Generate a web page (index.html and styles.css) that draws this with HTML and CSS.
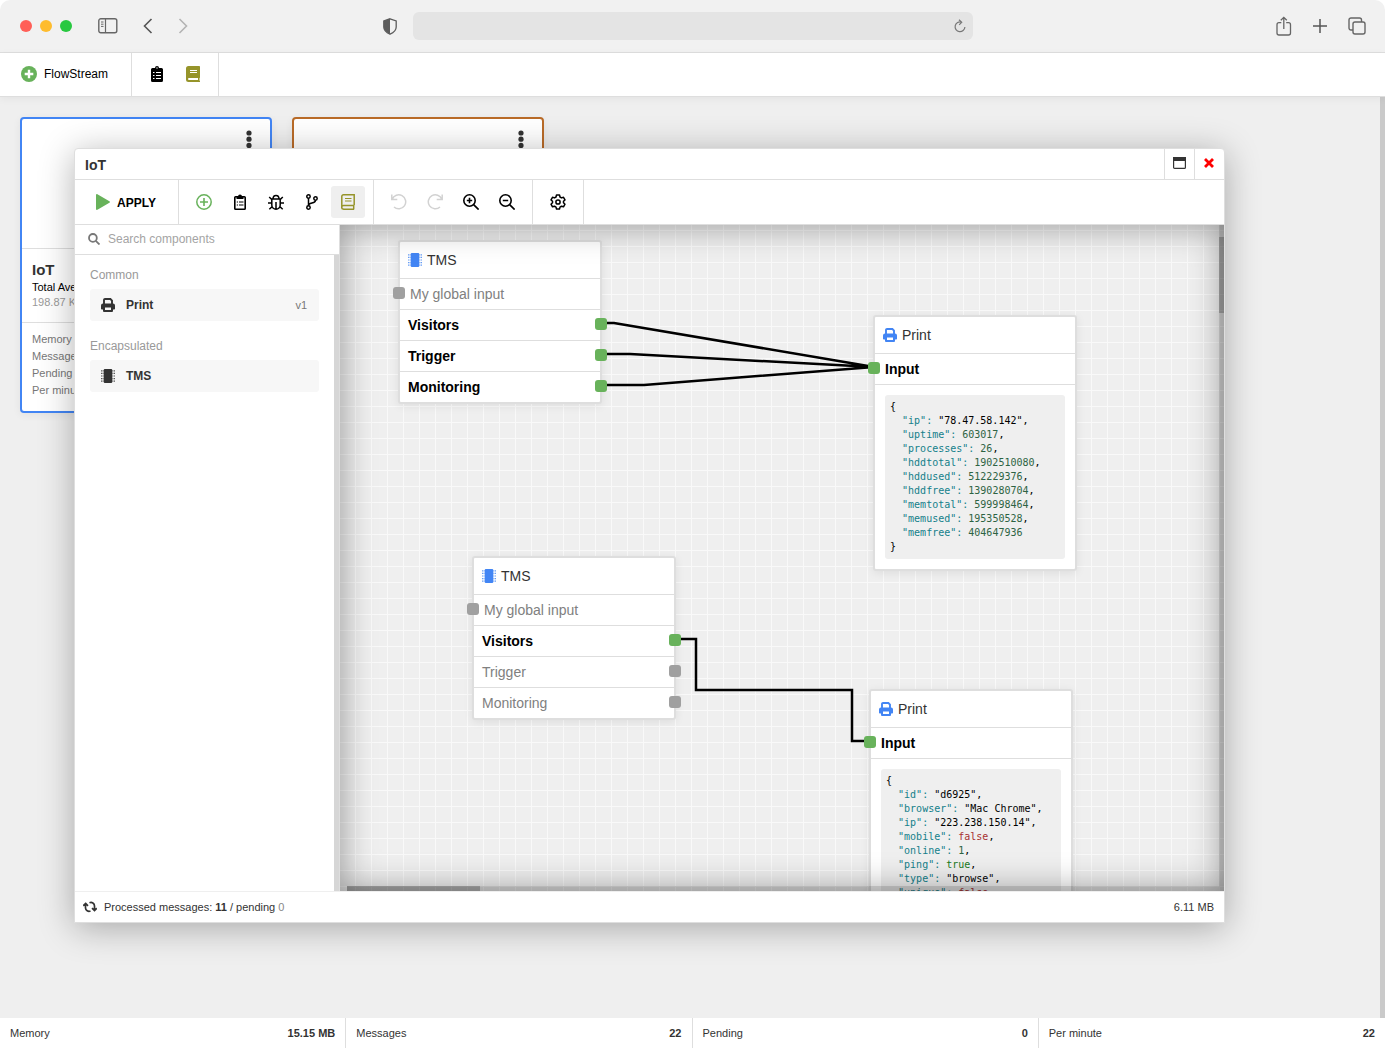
FILE: index.html
```html
<!DOCTYPE html>
<html lang="en">
<head>
<meta charset="utf-8">
<title>FlowStream</title>
<link rel="stylesheet" href="styles.css">
</head>
<body>
<svg class="sprite" aria-hidden="true">
  <symbol id="chip" viewBox="0 0 14 14"><rect x="2.700" y="0" width="8.600" height="14" rx="1.200" fill="currentColor"/><path d="M0 1.800h2.500M0 4.400h2.500M0 7h2.500M0 9.600h2.500M0 12.200h2.500M11.500 1.800H14M11.500 4.400H14M11.500 7H14M11.500 9.600H14M11.500 12.200H14" stroke="currentColor" stroke-width="1.200" stroke-dasharray="1 .5" opacity=".8"/></symbol>
  <symbol id="printer" viewBox="0 0 14 14"><path d="M3 6V2a1 1 0 0 1 1-1h5.400L11 2.600V6" fill="none" stroke="currentColor" stroke-width="1.900"/><path fill="currentColor" fill-rule="evenodd" d="M2 5.500h10a2 2 0 0 1 2 2v3.200a.8.800 0 0 1-.8.800H12V13a1 1 0 0 1-1 1H3a1 1 0 0 1-1-1v-1.500H.8a.8.800 0 0 1-.8-.8V7.500a2 2 0 0 1 2-2zM4 9.500v2.600h6V9.500z"/></symbol>
</svg>
<header class="chrome">
  <div class="lights"><i class="light red"></i><i class="light amber"></i><i class="light green"></i></div>
  <button class="plain sidebar-toggle" aria-label="Sidebar"><svg width="20" height="16" viewBox="0 0 20 16" fill="none" stroke="#666"><rect x=".8" y=".8" width="18" height="14" rx="2" stroke-width="1.400"/><path d="M7.500 1v14" stroke-width="1.200"/><path d="M3 4h2.500M3 6.200h2.500M3 8.400h2.500"/></svg></button>
  <button class="plain back" aria-label="Back"><svg width="10" height="16" viewBox="0 0 10 16" fill="none" stroke="#555" stroke-width="1.600"><path d="M8.500 1 1.500 8l7 7"/></svg></button>
  <button class="plain forward" aria-label="Forward"><svg width="10" height="16" viewBox="0 0 10 16" fill="none" stroke="#b4b4b4" stroke-width="1.600"><path d="m1.500 1 7 7-7 7"/></svg></button>
  <div class="address">
    <svg width="14" height="17" viewBox="0 0 14 17"><path d="M7 .8 13.200 3v6c0 3.400-3 5.800-6.200 7.200C3.800 14.800.8 12.400.8 9V3z" fill="none" stroke="#5c5c5c" stroke-width="1.300"/><path d="M7 .8V16C3.800 14.600.8 12.400.8 9V3z" fill="#5c5c5c"/></svg>
    <div class="field"><input type="text" aria-label="Address"><button class="plain" aria-label="Reload"><svg width="12" height="14" viewBox="0 0 12 14" fill="none" stroke="#777" stroke-width="1.200"><path d="M7.500 3.100A4.900 4.900 0 1 0 10.900 8M5 .8l2.700 2.400-2.500 2.600"/></svg></button></div>
  </div>
  <div class="chrome-tools">
    <button class="plain" aria-label="Share"><svg width="16" height="20" viewBox="0 0 16 20" fill="none" stroke="#666" stroke-width="1.300"><path d="M5.300 6.700H3a2 2 0 0 0-2 2v8.300a2 2 0 0 0 2 2h9.500a2 2 0 0 0 2-2V8.700a2 2 0 0 0-2-2h-2.300M7.800 13V1.500M4.800 4.300l3-3 3 3"/></svg></button>
    <button class="plain" aria-label="New tab"><svg width="14" height="14" viewBox="0 0 14 14" stroke="#555" stroke-width="1.500"><path d="M7 0v14M0 7h14"/></svg></button>
    <button class="plain" aria-label="Tabs"><svg width="18" height="18" viewBox="0 0 18 18" fill="none" stroke="#666" stroke-width="1.400"><rect x="5" y="5" width="12" height="12" rx="2"/><path d="M5 13H3a2 2 0 0 1-2-2V3a2 2 0 0 1 2-2h8.500a2 2 0 0 1 2 2v2"/></svg></button>
  </div>
</header>
<nav class="appbar">
  <div class="group brand"><button class="plain"><svg width="16" height="16" viewBox="0 0 16 16"><circle cx="8" cy="8" r="8" fill="#68b25b"/><path d="M8 3.700v8.600M3.700 8h8.600" stroke="#fff" stroke-width="2.400"/></svg>FlowStream</button></div>
  <div class="group shortcuts">
    <button class="plain" aria-label="Clipboard"><svg width="12" height="16" viewBox="0 0 12 16"><path d="M1.500 2H4a2 2 0 0 1 4 0h2.500A1.500 1.500 0 0 1 12 3.500v11a1.500 1.500 0 0 1-1.500 1.500h-9A1.500 1.500 0 0 1 0 14.500v-11A1.500 1.500 0 0 1 1.500 2z"/><path d="M2 6.500h1.500M5 6.500h5M2 9.500h1.500M5 9.500h5M2 12.500h1.500M5 12.500h5" stroke="#fff"/><circle cx="6" cy="2" r=".7" fill="#fff"/></svg></button>
    <button class="plain" aria-label="Documentation"><svg width="14" height="16" viewBox="0 0 14 16"><path fill="#96942a" d="M2.500 0h10.700a.8.800 0 0 1 .8.800v10.700l-.5.700v2.300l.5.500v1H2.500A2.500 2.500 0 0 1 0 13.500v-11A2.500 2.500 0 0 1 2.500 0z"/><path d="M4 4.500h7M4 6.500h7" stroke="#fff"/><path d="M3 12h9v2H3a1 1 0 0 1 0-2z" fill="#fff"/></svg></button>
  </div>
</nav>
<main class="desktop">
  <section class="cards">
    <article class="card active">
      <div class="card-top"><button class="plain" aria-label="Menu"><svg width="6" height="18" viewBox="0 0 6 18" fill="#333"><circle cx="3" cy="3" r="2.600"/><circle cx="3" cy="9.200" r="2.600"/><circle cx="3" cy="15.400" r="2.600"/></svg></button></div>
      <div class="card-title"><h2>IoT</h2><p>Total Average</p><small>198.87 KB</small></div>
      <ul><li>Memory</li><li>Messages</li><li>Pending</li><li>Per minute</li></ul>
    </article>
    <article class="card orange">
      <div class="card-top"><button class="plain" aria-label="Menu"><svg width="6" height="18" viewBox="0 0 6 18" fill="#333"><circle cx="3" cy="3" r="2.600"/><circle cx="3" cy="9.200" r="2.600"/><circle cx="3" cy="15.400" r="2.600"/></svg></button></div>
    </article>
  </section>
  <section class="window">
    <header class="titlebar">
      <h1>IoT</h1>
      <button class="plain" aria-label="Maximize"><svg width="13" height="12" viewBox="0 0 13 12"><rect x=".6" y=".6" width="11.800" height="10.800" rx="1" fill="#fff" stroke="#333" stroke-width="1.200"/><path d="M0 0h13v4H0z" fill="#333"/></svg></button>
      <button class="plain" aria-label="Close"><svg width="10" height="10" viewBox="0 0 10 10" stroke="#f00" stroke-width="2.800"><path d="m1 1 8 8M9 1 1 9"/></svg></button>
    </header>
    <div class="toolbar">
      <div class="tools apply"><button class="plain"><svg width="14" height="16" viewBox="0 0 14 16"><path fill="#68b25b" d="M0 1C0 .2.700-.2 1.400.2l12 7c.7.400.7 1.200 0 1.600l-12 7C.700 16.200 0 15.800 0 15z"/></svg><span>APPLY</span></button></div>
      <div class="tools">
        <button class="plain" aria-label="Add"><svg width="16" height="16" viewBox="0 0 16 16" fill="none" stroke="#68b25b"><circle cx="8" cy="8" r="7.200" stroke-width="1.500"/><path d="M8 4v8M4 8h8" stroke-width="1.600"/></svg></button>
        <button class="plain" aria-label="Clipboard"><svg width="12" height="16" viewBox="0 0 12 16"><rect x=".8" y="2.800" width="10.400" height="12.400" rx=".8" fill="none" stroke="#000" stroke-width="1.600"/><path d="M2.500 5V2.500H4a2 2 0 0 1 4 0h1.500V5z"/><path d="M2.800 8h1.200M5 8h4.500M2.800 11h1.200M5 11h4.500" stroke="#000"/></svg></button>
        <button class="plain" aria-label="Debug"><svg width="16" height="16" viewBox="0 0 16 16" fill="none" stroke="#000" stroke-width="1.500"><path d="M3.800 5h8.400v6a4.200 4.200 0 0 1-8.400 0zM5 5a3 3.500 0 0 1 6 0M8 8v7M0 9h4M12 9h4M1.200 3 4 5.700M14.800 3 12 5.700M1.300 15.300l3-2.800M14.700 15.300l-3-2.800"/></svg></button>
        <button class="plain" aria-label="Branches"><svg width="12" height="16" viewBox="0 0 12 16" fill="none" stroke="#000" stroke-width="1.500"><circle cx="2.500" cy="2.500" r="1.700"/><circle cx="2.500" cy="13.500" r="1.700"/><circle cx="9.500" cy="4.500" r="1.700"/><path d="M2.500 4.200v7.600M9.500 6.200c0 4-7 1.800-7 5.600"/></svg></button>
        <button class="plain selected" aria-label="Documentation"><svg width="14" height="16" viewBox="0 0 14 16" fill="none" stroke="#96942a" stroke-width="1.500"><path d="M13.200 11.300V.8H2.500A1.700 1.700 0 0 0 .8 2.500v11a1.700 1.700 0 0 0 1.700 1.700h10.700M13.200 11.500H2.500a1.800 1.800 0 0 0 0 3.600M12.700 11.500v3.600"/><path d="M4 4.500h6.500M4 7h6.500" stroke-width="1.200"/></svg></button>
      </div>
      <div class="tools">
        <button class="plain faded" aria-label="Undo"><svg width="16" height="16" viewBox="0 0 16 16" fill="none" stroke="currentColor" stroke-width="1.500"><path d="M.8.500v5h5.500M1.200 5.200A7 7 0 1 1 3 13"/></svg></button>
        <button class="plain faded" aria-label="Redo"><svg width="16" height="16" viewBox="0 0 16 16" fill="none" stroke="currentColor" stroke-width="1.500"><path d="M15.200.5v5H9.700M14.800 5.200A7 7 0 1 0 13 13"/></svg></button>
        <button class="plain" aria-label="Zoom in"><svg width="16" height="16" viewBox="0 0 16 16" fill="none" stroke="#000" stroke-width="1.600"><circle cx="6.500" cy="6.500" r="5.700"/><path d="m10.600 10.600 5 5M6.500 3.800v5.400M3.800 6.500h5.400"/></svg></button>
        <button class="plain" aria-label="Zoom out"><svg width="16" height="16" viewBox="0 0 16 16" fill="none" stroke="#000" stroke-width="1.600"><circle cx="6.500" cy="6.500" r="5.700"/><path d="m10.600 10.600 5 5M3.800 6.500h5.400"/></svg></button>
      </div>
      <div class="tools">
        <button class="plain" aria-label="Settings"><svg width="16" height="16" viewBox="0 0 16 16" fill="none" stroke="#000" stroke-width="1.500" stroke-linejoin="round"><path d="M6.500 1h3l.5 2 1.500.900 2-.6 1.500 2.600L13.500 7.200v1.600L15 10.200l-1.500 2.600-2-.6-1.500.900-.5 2h-3l-.5-2-1.500-.9-2 .6L1 10.200l1.500-1.400V7.200L1 5.900l1.500-2.600 2 .6L6 3z"/><circle cx="8" cy="8" r="2.100"/></svg></button>
      </div>
    </div>
    <div class="workspace">
      <aside class="sidebar">
        <label class="search"><svg width="12" height="12" viewBox="0 0 12 12" fill="none" stroke="#777" stroke-width="1.800"><circle cx="4.900" cy="4.900" r="3.900"/><path d="m7.800 7.800 3.700 3.700"/></svg><input type="text" placeholder="Search components" aria-label="Search components"></label>
        <div class="components">
          <h3>Common</h3>
          <button class="plain component"><svg width="14" height="14"><use href="#printer"/></svg><b>Print</b><span>v1</span></button>
          <h3>Encapsulated</h3>
          <button class="plain component"><svg width="14" height="14"><use href="#chip"/></svg><b>TMS</b></button>
        </div>
      </aside>
      <div class="canvas">
        <svg class="wires" width="884" height="666" fill="none" stroke="#000" stroke-width="2.500"><path d="M266 98h8L534 142M266 129h24L534 142M266 160h38L534 142M340 414h16v51h156v51h18"/></svg>
        <article class="node" style="left:58px;top:15px">
          <h4><svg width="14" height="14"><use href="#chip"/></svg>TMS</h4>
          <p class="in">My global input</p><p class="out on">Visitors</p><p class="out on">Trigger</p><p class="out on">Monitoring</p>
        </article>
        <article class="node" style="left:132px;top:331px">
          <h4><svg width="14" height="14"><use href="#chip"/></svg>TMS</h4>
          <p class="in">My global input</p><p class="out on">Visitors</p><p class="out">Trigger</p><p class="out">Monitoring</p>
        </article>
        <article class="node" style="left:533px;top:90px">
          <h4><svg width="14" height="14"><use href="#printer"/></svg>Print</h4>
          <p class="in on">Input</p>
<pre>{
  <i>"ip":</i> "78.47.58.142",
  <i>"uptime":</i> <u>603017</u>,
  <i>"processes":</i> <u>26</u>,
  <i>"hddtotal":</i> <u>1902510080</u>,
  <i>"hddused":</i> <u>512229376</u>,
  <i>"hddfree":</i> <u>1390280704</u>,
  <i>"memtotal":</i> <u>599998464</u>,
  <i>"memused":</i> <u>195350528</u>,
  <i>"memfree":</i> <u>404647936</u>
}</pre>
        </article>
        <article class="node" style="left:529px;top:464px">
          <h4><svg width="14" height="14"><use href="#printer"/></svg>Print</h4>
          <p class="in on">Input</p>
<pre>{
  <i>"id":</i> "d6925",
  <i>"browser":</i> "Mac Chrome",
  <i>"ip":</i> "223.238.150.14",
  <i>"mobile":</i> <em>false</em>,
  <i>"online":</i> <u>1</u>,
  <i>"ping":</i> <b>true</b>,
  <i>"type":</i> "browse",
  <i>"unique":</i> <em>false</em>
}</pre>
        </article>
        <div class="vignette"></div>
        <div class="bar-v"></div>
        <div class="bar-h"></div>
      </div>
    </div>
    <footer class="status">
      <svg width="14" height="12" viewBox="0 0 14 12" fill="none" stroke="#333" stroke-width="1.700"><path d="M2.500 3v4a3.500 3.500 0 0 0 5 3M.2 4.800l2.500-2.300L5 4.800M11.500 9V5a3.500 3.500 0 0 0-5-3.200M9 7.200l2.500 2.300 2.300-2.300"/></svg>
      <span>Processed messages: <b>11</b> / pending <span class="muted">0</span></span>
      <span class="size">6.11 MB</span>
    </footer>
  </section>
</main>
<footer class="stats">
  <div><span>Memory</span><b>15.15 MB</b></div>
  <div><span>Messages</span><b>22</b></div>
  <div><span>Pending</span><b>0</b></div>
  <div><span>Per minute</span><b>22</b></div>
</footer>
</body>
</html>
```

FILE: styles.css
```css
* { box-sizing: border-box; margin: 0; padding: 0; }
body {
  display: flex;
  flex-direction: column;
  min-height: 100vh;
  background: #fff;
  color: #333;
  font: 12px/18px "Liberation Sans", Arial, sans-serif;
}
svg { display: block; flex: none; }
.sprite { position: absolute; width: 0; height: 0; }
.plain { border: 0; background: none; color: inherit; font: inherit; }

/* browser frame */
.chrome {
  display: flex;
  align-items: center;
  height: 53px;
  padding: 0 19px 0 20px;
  background: #f1f1f1;
  border-bottom: 1px solid #dedede;
  border-radius: 10px 10px 0 0;
}
.lights { display: flex; gap: 8px; }
.light { width: 12px; height: 12px; border-radius: 50%; }
.red { background: #ff5f57; }
.amber { background: #febc2e; }
.green { background: #28c840; }
.sidebar-toggle { margin-left: 26px; }
.back { margin-left: 25px; }
.forward { margin-left: 25px; }
.address {
  display: flex;
  flex: 1;
  align-items: center;
  gap: 16px;
  margin-left: 195px;
}
.field {
  display: flex;
  flex: 0 1 560px;
  align-items: center;
  height: 28px;
  padding-right: 7px;
  background: #e4e4e4;
  border-radius: 6px;
}
.field input { flex: 1; border: 0; background: none; outline: 0; }
.chrome-tools { display: flex; align-items: center; gap: 21px; }

/* application bar */
.appbar {
  display: flex;
  position: relative;
  z-index: 1;
  height: 44px;
  background: #fff;
  border-bottom: 1px solid #dedede;
  box-shadow: 0 2px 8px rgba(0, 0, 0, .05);
}
.group { display: flex; align-items: center; border-right: 1px solid #dedede; }
.brand { padding: 0 23px 2px 21px; color: #000; }
.brand button { display: flex; align-items: center; gap: 7px; }
.shortcuts { gap: 23px; padding: 0 18px 2px 19px; }

/* desktop and cards */
.desktop {
  position: relative;
  flex: 1;
  padding: 20px;
  background: #efefef;
  border-right: 5px solid #cacaca;
}
.cards { display: flex; gap: 20px; align-items: flex-start; }
.card {
  width: 252px;
  height: 296px;
  background: #fff;
  border: 2px solid #4285f4;
  border-radius: 4px;
  box-shadow: 0 2px 8px rgba(0, 0, 0, .06);
}
.orange { border-color: #b96b28; }
.card-top { display: flex; justify-content: flex-end; height: 129px; padding: 11px 18px; }
.card-top button { height: 18px; }
.card-title { height: 75px; padding: 11px 10px; border-top: 1px solid #dedede; border-bottom: 1px solid #dedede; }
.card h2 { font-size: 15px; line-height: 20px; }
.card p { color: #000; font-size: 11px; line-height: 15px; }
.card small { display: block; color: #999; font-size: 11px; line-height: 15px; }
.card ul { padding: 8px 10px; color: #777; font-size: 11px; line-height: 17px; list-style: none; }

/* floating window */
.window {
  position: absolute;
  display: flex;
  flex-direction: column;
  top: 51px;
  right: 155px;
  bottom: 95px;
  left: 74px;
  background: #fff;
  border: 1px solid #dedede;
  border-radius: 4px 4px 0 0;
  box-shadow: 0 5px 35px rgba(0, 0, 0, .3);
}
.titlebar { display: flex; height: 31px; border-bottom: 1px solid #dedede; }
.titlebar h1 { flex: 1; padding-left: 10px; font-size: 14px; line-height: 32px; }
.titlebar button { display: grid; place-items: center; width: 30px; padding: 0 1px 2px 0; border-left: 1px solid #dedede; }
.toolbar { display: flex; height: 45px; border-bottom: 1px solid #dedede; }
.tools { display: flex; align-items: center; gap: 2px; padding: 0 8px; border-right: 1px solid #dedede; }
.tools button { display: grid; place-items: center; width: 34px; height: 32px; border-radius: 3px; }
.tools .selected { background: #efefef; }
.tools .faded { color: #d2d2d2; }
.tools.apply { padding: 0 22px 0 21px; color: #000; font-weight: bold; }
.tools.apply button { display: flex; align-items: center; gap: 7px; width: auto; }
.tools.apply span { padding-top: 2px; }
.workspace { display: flex; flex: 1; min-height: 0; }

/* component list */
.sidebar { display: flex; flex: none; flex-direction: column; width: 265px; border-right: 1px solid #dedede; }
.search { display: flex; align-items: center; gap: 8px; height: 30px; padding: 0 13px 2px; border-bottom: 1px solid #dedede; }
.search input { flex: 1; border: 0; outline: 0; font: 12px/18px "Liberation Sans", Arial, sans-serif; }
.search input::placeholder { color: #a4a4a4; }
.components { flex: 1; padding: 11px 15px; border-right: 5px solid #d6d6d6; }
.components h3 { margin-bottom: 5px; color: #999; font-size: 12px; font-weight: normal; }
.component {
  display: flex;
  align-items: center;
  gap: 11px;
  width: 100%;
  height: 32px;
  margin-bottom: 16px;
  padding: 0 12px 0 11px;
  background: #f7f7f7;
  border-radius: 3px;
  text-align: left;
}
.component span { margin-left: auto; color: #777; font-size: 11px; }

/* diagram */
.canvas {
  position: relative;
  flex: 1;
  overflow: hidden;
  background-color: #efefef;
  background-image: linear-gradient(#f9f9f9 1px, transparent 1px), linear-gradient(90deg, #f9f9f9 1px, transparent 1px);
  background-position: 15px 5px;
  background-size: 16px 16px;
}
.wires { position: absolute; top: 0; left: 0; }
.node {
  position: absolute;
  width: 204px;
  background: #fff;
  border: 2px solid #dedede;
  border-radius: 3px;
  box-shadow: 0 2px 10px rgba(0, 0, 0, .08);
  font-size: 14px;
}
.node h4 { display: flex; align-items: center; gap: 5px; height: 36px; padding: 0 8px; font-size: 14px; font-weight: normal; }
.node h4 svg { color: #4285f4; }
.node p { position: relative; height: 31px; padding: 0 8px; border-top: 1px solid #dedede; color: #808080; line-height: 31px; }
.node .in { padding-left: 10px; }
.node .on { color: #000; font-weight: bold; }
.node p::after {
  content: "";
  position: absolute;
  top: 8px;
  right: -7px;
  width: 12px;
  height: 12px;
  background: #a0a0a0;
  border-radius: 3px;
}
.node .in::after { right: auto; left: -7px; }
.node .on::after { background: #68b25b; }
.node .in.on { border-bottom: 1px solid #dedede; height: 32px; }
.node pre {
  margin: 10px;
  padding: 5px;
  background: #efefef;
  border-radius: 3px;
  color: #000;
  font: 10px/14px "DejaVu Sans Mono", monospace;
}
.node i { color: #14808a; font-style: normal; }
.node u { color: #2d6343; text-decoration: none; }
.node em { color: #a83232; font-style: normal; }
.node pre b { color: #1a7a1a; font-weight: normal; }
.vignette { position: absolute; inset: 0; box-shadow: inset 0 0 35px rgba(0, 0, 0, .4); pointer-events: none; }
.bar-v { position: absolute; top: 0; right: 0; bottom: 0; width: 5px; background: linear-gradient(rgba(0, 0, 0, .22), rgba(0, 0, 0, .22)) 0 12px / 5px 76px no-repeat rgba(0, 0, 0, .15); }
.bar-h { position: absolute; right: 5px; bottom: 0; left: 7px; height: 5px; background: linear-gradient(rgba(0, 0, 0, .22), rgba(0, 0, 0, .22)) 0 0 / 133px 5px no-repeat rgba(0, 0, 0, .12); }
.status { display: flex; align-items: center; gap: 7px; height: 31px; padding: 0 10px 0 8px; border-top: 1px solid #efefef; font-size: 11px; }
.muted { color: #888; }
.size { margin-left: auto; }

/* totals */
.stats { display: grid; grid-template-columns: repeat(4, 1fr); height: 30px; font-size: 11px; line-height: 30px; }
.stats div { display: flex; justify-content: space-between; padding: 0 10px; border-right: 1px solid #dedede; }
.stats div:last-child { border-right: 0; }
```
